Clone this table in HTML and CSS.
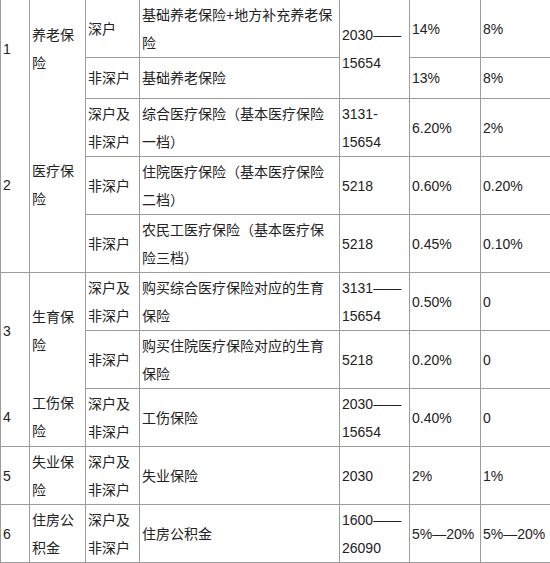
FILE: index.html
```html
<!DOCTYPE html>
<html lang="zh-CN">
<head>
<meta charset="utf-8">
<title>社保缴费比例</title>
<link rel="stylesheet" href="styles.css">
</head>
<body>
<table class="rates">
  <colgroup>
    <col class="c-no">
    <col class="c-type">
    <col class="c-hukou">
    <col class="c-item">
    <col class="c-base">
    <col class="c-unit">
    <col class="c-self">
  </colgroup>
  <tbody>
    <tr class="r2">
      <td rowspan="2">1</td>
      <td rowspan="2">养老保险</td>
      <td>深户</td>
      <td>基础养老保险+地方补充养老保险</td>
      <td rowspan="2">2030——15654</td>
      <td>14%</td>
      <td>8%</td>
    </tr>
    <tr class="r1">
      <td>非深户</td>
      <td>基础养老保险</td>
      <td>13%</td>
      <td>8%</td>
    </tr>
    <tr class="r2">
      <td rowspan="3" class="open-top">2</td>
      <td rowspan="3" class="open-top">医疗保险</td>
      <td>深户及非深户</td>
      <td>综合医疗保险（基本医疗保险一档）</td>
      <td>3131-15654</td>
      <td>6.20%</td>
      <td>2%</td>
    </tr>
    <tr class="r2">
      <td>非深户</td>
      <td>住院医疗保险（基本医疗保险二档）</td>
      <td>5218</td>
      <td>0.60%</td>
      <td>0.20%</td>
    </tr>
    <tr class="r2">
      <td>非深户</td>
      <td>农民工医疗保险（基本医疗保险三档）</td>
      <td>5218</td>
      <td>0.45%</td>
      <td>0.10%</td>
    </tr>
    <tr class="r2">
      <td rowspan="2">3</td>
      <td rowspan="2">生育保险</td>
      <td>深户及非深户</td>
      <td>购买综合医疗保险对应的生育保险</td>
      <td>3131——15654</td>
      <td>0.50%</td>
      <td>0</td>
    </tr>
    <tr class="r2">
      <td>非深户</td>
      <td>购买住院医疗保险对应的生育保险</td>
      <td>5218</td>
      <td>0.20%</td>
      <td>0</td>
    </tr>
    <tr class="r2">
      <td class="open-top">4</td>
      <td class="open-top">工伤保险</td>
      <td>深户及非深户</td>
      <td>工伤保险</td>
      <td>2030——15654</td>
      <td>0.40%</td>
      <td>0</td>
    </tr>
    <tr class="r2">
      <td>5</td>
      <td>失业保险</td>
      <td>深户及非深户</td>
      <td>失业保险</td>
      <td>2030</td>
      <td>2%</td>
      <td>1%</td>
    </tr>
    <tr class="r2">
      <td>6</td>
      <td>住房公积金</td>
      <td>深户及非深户</td>
      <td>住房公积金</td>
      <td>1600——26090</td>
      <td>5%—20%</td>
      <td>5%—20%</td>
    </tr>
  </tbody>
</table>
</body>
</html>
```
FILE: styles.css
```css
html, body {
  margin: 0;
  padding: 0;
  background: #ffffff;
  overflow: hidden;
}

.rates {
  border-collapse: collapse;
  table-layout: fixed;
  width: 555px;
  margin-top: -1px;
  font-family: "Liberation Sans", "Noto Sans CJK SC", sans-serif;
  font-size: 14px;
  line-height: 28px;
  color: #222222;
}

.rates td {
  border: 1px solid #9c9c9c;
  padding: 0 4px 0 2px;
  vertical-align: middle;
  text-align: left;
  word-break: normal;
}

.rates td.open-top {
  border-top-style: hidden;
}

.c-no { width: 29px; }
.c-type { width: 56px; }
.c-hukou { width: 54px; }
.c-item { width: 200px; }
.c-base { width: 70px; }
.c-unit { width: 71px; }
.c-self { width: 75px; }

.r2 { height: 58px; }
.r1 { height: 41px; }
```
